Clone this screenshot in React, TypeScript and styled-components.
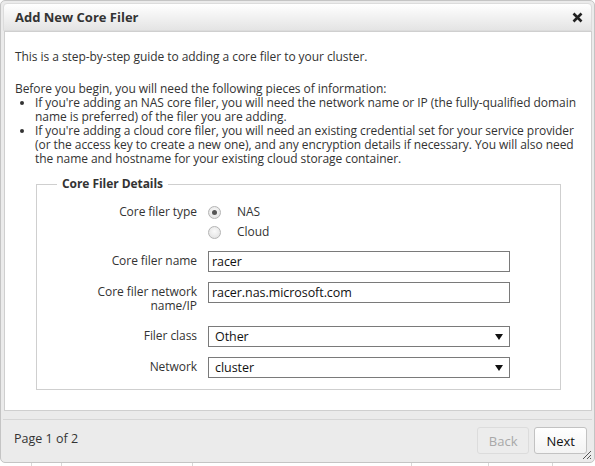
import React from "react";
import styled, { createGlobalStyle } from "styled-components";

const GlobalStyle = createGlobalStyle`
  html, body {
    margin: 0;
    padding: 0;
    background: #ffffff;
  }
  body {
    font-family: "Open Sans", "Noto Sans", Arial, sans-serif;
    font-size: 12px;
    color: #333;
  }
  * { box-sizing: border-box; }
`;

const Page = styled.div`
  width: 595px;
  height: 466px;
  position: relative;
  overflow: hidden;
  background: #fff;
`;

const Dialog = styled.div`
  position: relative;
  width: 595px;
  height: 463px;
  background: #ebebeb;
  border: 1px solid #c4c4c4;
  border-radius: 5px;
  padding: 2px 2px 0 2px;
  display: flex;
  flex-direction: column;
`;

const TitleBar = styled.div`
  height: 28px;
  flex: none;
  display: flex;
  align-items: center;
  justify-content: space-between;
  padding: 0 8px 0 11px;
  border: 1px solid #dcdcdc;
  border-radius: 4px 4px 0 0;
  background: linear-gradient(#ffffff, #e4e4e4);
`;

const Title = styled.div`
  font-weight: 700;
  font-size: 13px;
  color: #333;
`;

const CloseBtn = styled.div`
  width: 12px;
  height: 12px;
  display: flex;
  align-items: center;
  justify-content: center;
`;

const Body = styled.div`
  flex: none;
  height: 380px;
  margin: 0 0 0 1px;
  background: #fff;
  border: 1px solid #cfcfcf;
  padding: 18px 12px 0 10px;
  line-height: 14px;
  letter-spacing: -0.06px;
`;

const Para = styled.p`
  margin: 0 0 18px 0;
`;

const IntroBlock = styled.div``;

const List = styled.ul`
  margin: 0;
  padding-left: 20px;
  list-style: disc;
`;

const Fieldset = styled.fieldset`
  margin: 11px 18px 0 21px;
  padding: 14px 10px 11px 48px;
  border: 1px solid #cfcfcf;
  min-width: 0;
`;

const Legend = styled.legend`
  font-weight: 700;
  font-size: 12px;
  color: #333;
  padding: 0 5px;
  margin-left: -28px;
`;

const Row = styled.div<{ $gap?: number }>`
  display: grid;
  grid-template-columns: 112px 302px;
  column-gap: 11px;
  align-items: start;
  margin-top: ${(p) => p.$gap ?? 0}px;
`;

const Label = styled.div<{ $pad?: number }>`
  text-align: right;
  padding-top: ${(p) => p.$pad ?? 3}px;
  color: #333;
  line-height: 14px;
`;

const RadioGroup = styled.div`
  display: flex;
  flex-direction: column;
  gap: 6px;
`;

const RadioItem = styled.label`
  display: flex;
  align-items: center;
  gap: 16px;
  height: 14px;
`;

const RadioCircle = styled.span<{ $checked?: boolean }>`
  width: 13px;
  height: 13px;
  border-radius: 50%;
  border: 1px solid #b4b4b4;
  background: radial-gradient(circle at 50% 40%, #fafafa, #dedede);
  display: flex;
  align-items: center;
  justify-content: center;
  &::after {
    content: "";
    width: 5px;
    height: 5px;
    border-radius: 50%;
    background: ${(p) => (p.$checked ? "#555" : "transparent")};
  }
`;

const TextInput = styled.div`
  height: 21px;
  border: 1px solid #7a7a7a;
  padding: 0 3px;
  display: flex;
  align-items: center;
  font-size: 12.5px;
  color: #111;
`;

const Select = styled.div`
  height: 21px;
  border: 1px solid #7a7a7a;
  padding: 0 6px 0 6px;
  display: flex;
  align-items: center;
  justify-content: space-between;
  font-size: 12.5px;
  color: #111;
`;

const Footer = styled.div`
  flex: 1;
  margin-top: 8px;
  border-top: 1px solid #d6d6d6;
  display: flex;
  align-items: flex-start;
  justify-content: space-between;
  padding: 0 5px 0 11px;
`;

const PageInfo = styled.div`
  font-size: 12.5px;
  color: #333;
  padding-top: 10px;
`;

const Buttons = styled.div`
  display: flex;
  gap: 5px;
  padding-top: 7px;
`;

const Button = styled.div<{ $disabled?: boolean }>`
  height: 27px;
  padding: 0 11px;
  border-radius: 3px;
  display: flex;
  align-items: center;
  font-size: 13px;
  border: 1px solid ${(p) => (p.$disabled ? "#dcdcdc" : "#c2c2c2")};
  color: ${(p) => (p.$disabled ? "#a8a8a8" : "#111")};
  background: ${(p) => (p.$disabled ? "#ececec" : "linear-gradient(#ffffff, #f3f3f3)")};
`;

const Grip = styled.svg`
  position: absolute;
  right: 2px;
  bottom: 2px;
`;

const BelowStrip = styled.div`
  display: flex;
  height: 3px;
`;

const Cell = styled.div<{ $w: number }>`
  width: ${(p) => p.$w}px;
  border-right: 1px solid #d8d8d8;
`;

const Arrow = () => (
  <svg width="8" height="6" viewBox="0 0 8 6">
    <path d="M0 0 H8 L4 6 Z" fill="#111" />
  </svg>
);

export default function App() {
  return (
    <>
      <GlobalStyle />
      <Page>
        <Dialog>
          <TitleBar>
            <Title>Add New Core Filer</Title>
            <CloseBtn>
              <svg width="11" height="11" viewBox="0 0 11 11">
                <path d="M1.5 1.5 L9.5 9.5 M9.5 1.5 L1.5 9.5" stroke="#222" strokeWidth="2.6" strokeLinecap="butt" />
              </svg>
            </CloseBtn>
          </TitleBar>
          <Body>
            <IntroBlock>
              <Para>This is a step-by-step guide to adding a core filer to your cluster.</Para>
              <div>Before you begin, you will need the following pieces of information:</div>
              <List>
                <li>
                  If you're adding an NAS core filer, you will need the network name or IP (the fully-qualified domain
                  name is preferred) of the filer you are adding.
                </li>
                <li>
                  If you're adding a cloud core filer, you will need an existing credential set for your service provider
                  (or the access key to create a new one), and any encryption details if necessary. You will also need
                  the name and hostname for your existing cloud storage container.
                </li>
              </List>
            </IntroBlock>
            <Fieldset>
              <Legend>Core Filer Details</Legend>
              <Row>
                <Label $pad={0}>Core filer type</Label>
                <RadioGroup>
                  <RadioItem>
                    <RadioCircle $checked />
                    <span>NAS</span>
                  </RadioItem>
                  <RadioItem>
                    <RadioCircle />
                    <span>Cloud</span>
                  </RadioItem>
                </RadioGroup>
              </Row>
              <Row $gap={12}>
                <Label>Core filer name</Label>
                <TextInput>racer</TextInput>
              </Row>
              <Row $gap={10}>
                <Label>Core filer network name/IP</Label>
                <TextInput>racer.nas.microsoft.com</TextInput>
              </Row>
              <Row $gap={13}>
                <Label>Filer class</Label>
                <Select>
                  <span>Other</span>
                  <Arrow />
                </Select>
              </Row>
              <Row $gap={10}>
                <Label>Network</Label>
                <Select>
                  <span>cluster</span>
                  <Arrow />
                </Select>
              </Row>
            </Fieldset>
          </Body>
          <Footer>
            <PageInfo>Page 1 of 2</PageInfo>
            <Buttons>
              <Button $disabled>Back</Button>
              <Button>Next</Button>
            </Buttons>
          </Footer>
          <Grip width="12" height="12" viewBox="0 0 12 12">
            <path d="M11 3 L3 11 M11 7 L7 11 M11 10 L10 11" stroke="#555" strokeWidth="1" />
          </Grip>
        </Dialog>
        <BelowStrip>
          <Cell $w={32} />
          <Cell $w={30} />
          <Cell $w={131} />
          <Cell $w={219} />
          <Cell $w={77} />
          <Cell $w={64} />
        </BelowStrip>
      </Page>
    </>
  );
}
